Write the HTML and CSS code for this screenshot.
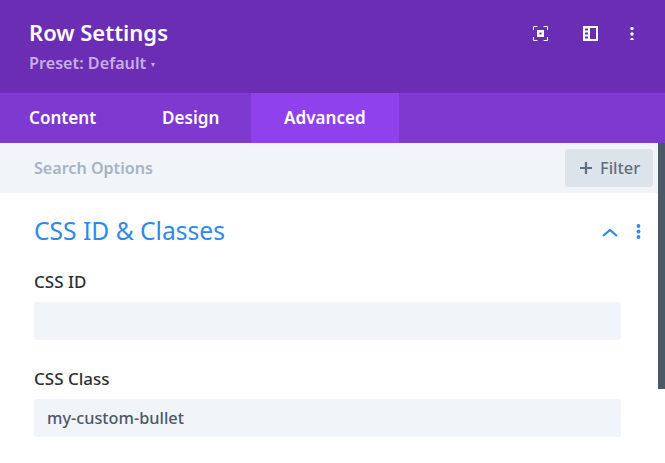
FILE: index.html
```html
<!DOCTYPE html>
<html lang="en">
<head>
<meta charset="utf-8">
<title>Row Settings</title>
<link rel="stylesheet" href="styles.css">
</head>
<body>
<div class="modal">
  <header class="head">
    <div class="head-text">
      <h1 class="title">Row Settings</h1>
      <div class="preset">Preset: Default <span class="caret"></span></div>
    </div>
    <div class="head-icons">
      <svg class="icon" width="15" height="15" viewBox="0 0 15 15" fill="none" stroke="#fff" stroke-width="1"><path d="M.5 4V.5h4M10.500.5h4V4M14.500 11v3.500h-4M4.500 14.500h-4V11"/><rect x="4" y="4" width="7" height="7" fill="#fff" stroke="none"/><rect x="6.500" y="6.500" width="2" height="2" fill="#6b2db3" stroke="none"/></svg>
      <svg class="icon" width="15" height="15" viewBox="0 0 15 15"><path fill="#fff" fill-rule="evenodd" d="M0 0h15v15H0zM2 2.500v2h3v-2zM2 6.500v2h3v-2zM2 10.500v2h3v-2zM7 2v11h6V2z"/></svg>
      <svg class="icon icon-dots" width="4" height="13" viewBox="0 0 4 13" fill="#fff"><circle cx="2" cy="1.500" r="1.700"/><circle cx="2" cy="7" r="1.700"/><circle cx="2" cy="12.500" r="1.700"/></svg>
    </div>
  </header>
  <nav class="tabs">
    <a class="tab tab-content">Content</a>
    <a class="tab tab-design">Design</a>
    <a class="tab tab-active">Advanced</a>
  </nav>
  <div class="panel">
    <div class="search">
      <span class="search-label">Search Options</span>
      <button class="filter"><svg width="12" height="12" viewBox="0 0 12 12"><path d="M6 0v12M0 6h12" stroke="#5f6f80" stroke-width="2.200"/></svg>Filter</button>
    </div>
    <main class="body">
      <div class="section-head">
        <h2 class="section-title">CSS ID &amp; Classes</h2>
        <div class="section-icons">
          <svg width="16" height="9" viewBox="0 0 16 9" fill="none" stroke="#2e8ae6" stroke-width="2.200"><path d="M1 8l7-6 7 6"/></svg>
          <svg width="5" height="15" viewBox="0 0 5 15" fill="#2e8ae6"><circle cx="2.500" cy="2" r="1.900"/><circle cx="2.500" cy="7.500" r="1.900"/><circle cx="2.500" cy="13" r="1.900"/></svg>
        </div>
      </div>
      <div class="field">
        <label class="label">CSS ID</label>
        <div class="input"></div>
      </div>
      <div class="field">
        <label class="label">CSS Class</label>
        <div class="input">my-custom-bullet</div>
      </div>
    </main>
    <div class="scrollbar"></div>
  </div>
</div>
</body>
</html>
```
FILE: styles.css
```css
* { box-sizing: border-box; }
html, body { margin: 0; height: 100%; overflow: hidden; background: #fff; }
body { font-family: "Noto Sans", sans-serif; }
.modal { width: 665px; height: 463px; display: flex; flex-direction: column; }
.head { height: 93px; background: #6b2db3; display: flex; justify-content: space-between; padding: 0 31px 0 29px; flex: none; }
.title { margin: 17px 0 0; font-size: 22px; line-height: 30px; font-weight: 600; color: #fff; }
.preset { margin-top: 7px; font-size: 16.200px; line-height: 19px; font-weight: 600; color: #c8aee8; }
.caret { display: inline-block; width: 0; height: 0; border: 2.500px solid transparent; border-top: 4px solid #c8aee8; border-bottom: 0; margin-left: 1px; vertical-align: 2px; }
.head-icons { display: flex; align-items: flex-start; padding-top: 26px; gap: 35px; }
.icon-dots { margin: 1px 0 0 -3px; }
.tabs { height: 50px; background: #7d39d0; display: flex; flex: none; }
.tab { font-size: 17.100px; font-weight: 600; color: #fff; line-height: 49px; }
.tab-content { padding-left: 29px; width: 162px; }
.tab-design { width: 89px; }
.tab-active { width: 148px; padding-left: 33px; background: #8f42ec; }
.panel { position: relative; flex: 1; display: flex; flex-direction: column; }
.search { height: 50px; background: #f1f4f9; display: flex; align-items: center; justify-content: space-between; padding: 0 12px 0 34px; flex: none; }
.search-label { font-size: 16.100px; font-weight: 600; color: #a5b4c3; }
.filter { width: 88px; height: 38px; border: 0; border-radius: 4px; background: #dde3ea; color: #5f6f80; font: 500 16.400px "Noto Sans", sans-serif; display: flex; align-items: center; gap: 8px; padding: 0 0 0 15px; margin-top: -1px; }
.body { flex: 1; padding: 0 44px 0 34px; }
.scrollbar { position: absolute; right: 0; top: 0; width: 7px; height: 246px; background: #4c5866; }
.section-head { display: flex; justify-content: space-between; align-items: center; margin-top: 20px; }
.section-title { margin: 0; font-size: 24.600px; line-height: 36px; font-weight: 400; color: #2e8ae6; }
.section-icons { display: flex; align-items: center; gap: 18px; margin-right: -20px; }
.section-icons svg:first-child { margin-top: 2px; margin-left: -3px; }
.field + .field { margin-top: 28px; }
.section-head + .field { margin-top: 22px; }
.label { display: block; font-size: 17px; line-height: 22px; font-weight: 500; color: #2b3036; margin-bottom: 9px; }
.input { height: 38px; background: #f1f4f9; border-radius: 3px; padding: 0 13px; font-size: 16.300px; line-height: 38px; font-weight: 500; color: #4c5866; }
```
